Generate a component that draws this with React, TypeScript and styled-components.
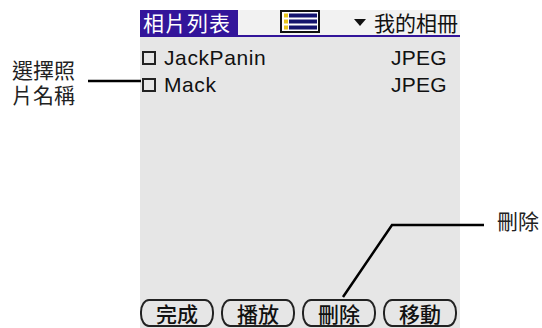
import styled, { createGlobalStyle } from "styled-components";

//* palm purple used for the title tab and the rule under the title bar
const PURPLE = "#33159a";

const GlobalStyle = createGlobalStyle`
  html, body {
    margin: 0;
    padding: 0;
    background: #ffffff;
  }
`;

type Photo = { name: string; kind: string };

const photos: Photo[] = [
  { name: "JackPanin", kind: "JPEG" },
  { name: "Mack", kind: "JPEG" },
];

const buttons = ["完成", "播放", "刪除", "移動"];

/*
 * ListIcon is the small list-view glyph in the title bar
*/
const ListIcon = () => (
  <svg width="40" height="23" viewBox="0 0 40 23">
    <rect x="1" y="1" width="38" height="21" fill="#ffffff" stroke="#111" strokeWidth="2" />
    {[3.5, 9.5, 15.5].map((y) => (
      <g key={y}>
        <rect x="4" y={y} width="4" height="4" fill="#e8c51a" />
        <rect x="9" y={y} width="28" height="4" fill="#14146e" />
      </g>
    ))}
  </svg>
);

/*
 * App draws the palm photo list screen with its two callouts
*/
const App = (): JSX.Element => {
  return (
    <>
      <GlobalStyle />
      <Page>
        <LeftNote>
          <NoteLine>選擇照</NoteLine>
          <NoteLine>片名稱</NoteLine>
        </LeftNote>

        <Screen>
          <TitleBar>
            <TitleTab>相片列表</TitleTab>
            <IconSlot>
              <ListIcon />
            </IconSlot>
            <Dropdown>
              <Arrow />
              我的相冊
            </Dropdown>
          </TitleBar>

          <List>
            {photos.map((p) => (
              <Row key={p.name}>
                <CheckBox />
                <Name>{p.name}</Name>
                <Kind>{p.kind}</Kind>
              </Row>
            ))}
          </List>

          <ButtonRow>
            {buttons.map((b) => (
              <PalmButton key={b}>{b}</PalmButton>
            ))}
          </ButtonRow>
        </Screen>

        <RightNote>
          <NoteLine>刪除</NoteLine>
        </RightNote>

        {/* callout leader lines drawn over the page */}
        <Leaders width="542" height="328" viewBox="0 0 542 328">
          <line x1="88" y1="81" x2="141" y2="81" />
          <polyline points="343,297 392,225 484,225" fill="none" />
        </Leaders>
      </Page>
    </>
  );
};

export default App;

//lines below this point are styled-components logic

const Page = styled.div`
  position: relative;
  width: 542px;
  height: 328px;
  display: flex;
  overflow: hidden;
`;

const LeftNote = styled.div`
  width: 140px;
  padding: 57px 0 0 12px;
  box-sizing: border-box;
  display: flex;
  flex-direction: column;
`;

const RightNote = styled.div`
  width: 82px;
  padding: 208px 0 0 37px;
  box-sizing: border-box;
`;

const NoteLine = styled.div`
  font-family: "Noto Sans CJK TC", sans-serif;
  font-size: 21px;
  line-height: 25px;
  height: 25px;
  color: #222;
  white-space: nowrap;
`;

const Screen = styled.div`
  width: 320px;
  height: 318px;
  margin-top: 10px;
  background: #e6e6e6;
  display: flex;
  flex-direction: column;
`;

const TitleBar = styled.div`
  height: 25px;
  display: flex;
  align-items: stretch;
  background: #f2f2f2;
  border-bottom: 2px solid ${PURPLE};
`;

const TitleTab = styled.div`
  width: 98px;
  box-sizing: border-box;
  padding-left: 3px;
  background: ${PURPLE};
  color: #fff;
  font-family: "Noto Sans CJK TC", sans-serif;
  font-size: 21px;
  line-height: 25px;
  letter-spacing: 1px;
`;

const IconSlot = styled.div`
  margin-left: 42px;
  display: flex;
  align-items: flex-start;
`;

const Dropdown = styled.div`
  flex: 1;
  display: flex;
  justify-content: flex-end;
  align-items: center;
  padding-right: 2px;
  font-family: "Noto Sans CJK TC", sans-serif;
  font-size: 21px;
  line-height: 25px;
  color: #111;
`;

const Arrow = styled.span`
  width: 0;
  height: 0;
  border-left: 6px solid transparent;
  border-right: 6px solid transparent;
  border-top: 7px solid #111;
  margin-right: 8px;
`;

const List = styled.div`
  padding-top: 7px;
  display: flex;
  flex-direction: column;
`;

const Row = styled.div`
  height: 27px;
  display: flex;
  align-items: center;
  padding: 0 13px 0 2px;
  font-family: "Liberation Sans", sans-serif;
  font-size: 21px;
  color: #111;
`;

const CheckBox = styled.span`
  width: 10px;
  height: 10px;
  border: 2px solid #222;
  margin-right: 8px;
`;

const Name = styled.span`
  flex: 1;
  letter-spacing: 0.6px;
`;

const Kind = styled.span`
  letter-spacing: 0.3px;
`;

const ButtonRow = styled.div`
  margin-top: auto;
  margin-bottom: 1px;
  display: flex;
  gap: 7px;
`;

const PalmButton = styled.div`
  width: 74px;
  height: 28px;
  box-sizing: border-box;
  border: 2px solid #222;
  border-radius: 9px / 13px;
  display: flex;
  align-items: center;
  justify-content: center;
  font-family: "Noto Sans CJK TC", sans-serif;
  font-size: 21px;
  font-weight: 500;
  color: #111;
`;

const Leaders = styled.svg`
  position: absolute;
  left: 0;
  top: 0;
  pointer-events: none;
  stroke: #000;
  stroke-width: 2.5;
`;
